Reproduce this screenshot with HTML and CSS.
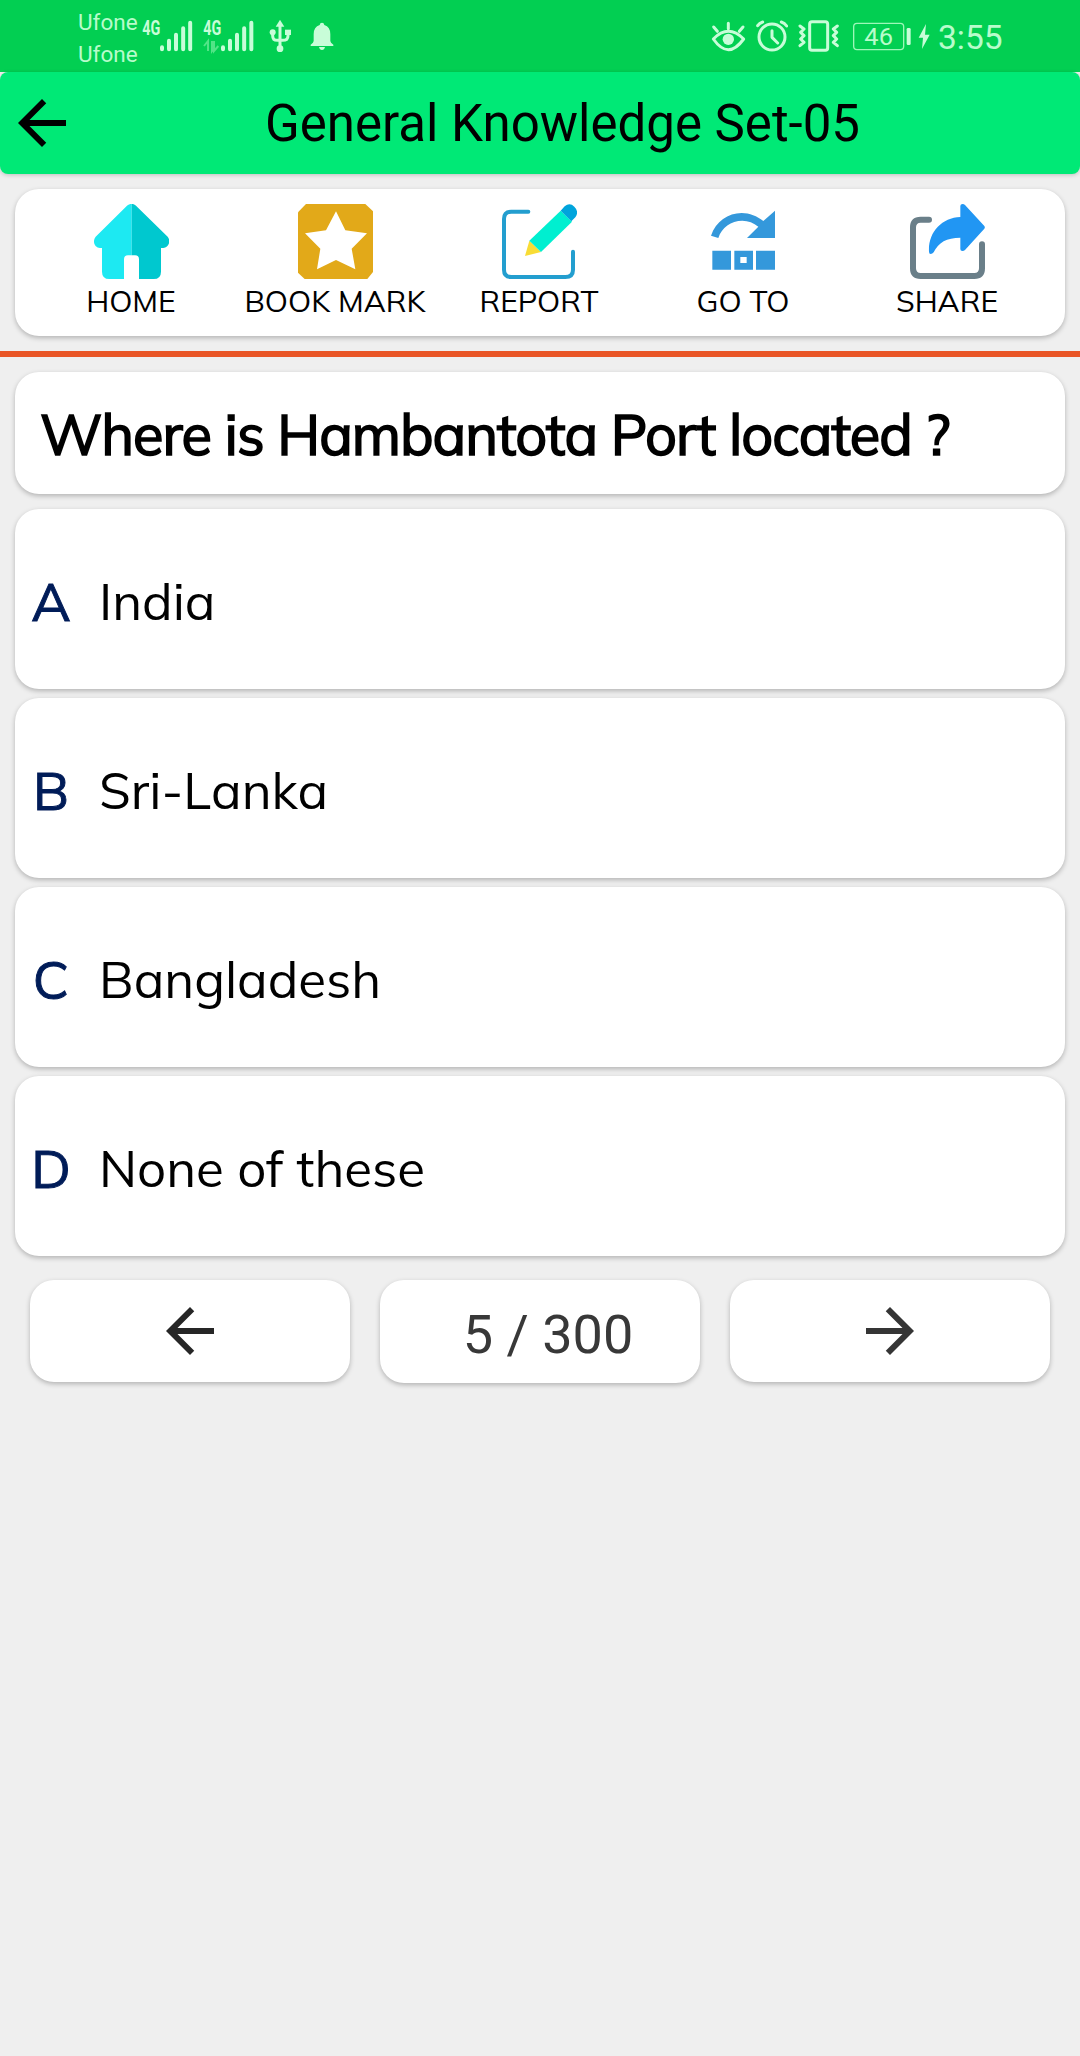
FILE: index.html
```html
<!DOCTYPE html>
<html lang="en">
<head>
  <meta charset="UTF-8">
  <meta name="viewport" content="width=device-width, initial-scale=1.0">
  <link rel="stylesheet" href="styles.css">
  <title>General Knowledge Set-05</title>
</head>
<body>
  <!-- Status bar -->
  <div class="status-bar">
    <div class="carrier">
      <span>Ufone</span>
      <span>Ufone</span>
    </div>
    <svg class="signal" width="52" height="36" viewBox="426 54 156 108">
      <text class="net" x="427" y="104" textLength="54" lengthAdjust="spacingAndGlyphs">4G</text>
      <path class="bars" d="M486 142v6M507 122v26M528 104v44M549.500 85v63M570.500 68v80"/>
    </svg>
    <svg class="signal-two" width="54" height="36" viewBox="606 54 162 108">
      <text class="net" x="610" y="104" textLength="54" lengthAdjust="spacingAndGlyphs">4G</text>
      <path class="data" d="M612 138l12-15v30M636 123v30l6-8M642 123v30l13-15"/>
      <path class="bars" d="M669 142v6M690 122v26M711 104v44M732.500 85v63M754 68v80"/>
    </svg>
    <svg class="usb" width="24" height="36" viewBox="804 54 72 108">
      <path class="line" d="M840 72v72M818 97v10q0 14 14 14h16q16 0 16-14v-10"/>
      <path class="fill" d="M840 59l13 21h-26z"/>
      <circle class="fill" cx="818" cy="97" r="9"/>
      <circle class="fill" cx="840" cy="146" r="10"/>
      <path class="fill" d="M855 89h18v16h-18z"/>
    </svg>
    <svg class="bell" width="24" height="36" viewBox="930 54 72 108">
      <path class="fill" d="M966 68q6 0 7 7 18 5 18 28v20q0 5 9 11v4h-68v-4q9-6 9-11v-20q0-23 18-28 1-7 7-7zM957 141h18q-2 9-9 9t-9-9z"/>
    </svg>

    <div class="status-right">
      <svg class="eye" width="36" height="36" viewBox="60 54 108 108">
        <path class="line" d="M70 117q45-46 91 0-46 64-91 0zM115 70v16M71 81l11 13M159 81l-11 13"/>
        <circle class="fill" cx="115" cy="118" r="17"/>
      </svg>
      <svg class="alarm" width="32" height="36" viewBox="198 54 96 108">
        <circle class="line" cx="246" cy="111" r="39"/>
        <path class="line" d="M246 92v20l17 17M203 77q5-8 15-11M274 66q10 3 16 12"/>
      </svg>
      <svg class="vibrate" width="42" height="36" viewBox="324 54 126 108">
        <rect class="line" x="359" y="65" width="54" height="86" rx="7"/>
        <path class="line" d="M330 78l12 9-10 10 10 10-10 10 10 10-12 10M442 78l-12 9 10 10-10 10 10 10-10 10 12 10"/>
      </svg>
      <svg class="battery" width="60" height="36" viewBox="486 54 180 108">
        <rect class="thin" x="491" y="70" width="150" height="79" rx="10"/>
        <text class="level" x="523" y="134" textLength="86" lengthAdjust="spacingAndGlyphs">46</text>
        <rect class="fill" x="650" y="84" width="12" height="51" rx="4"/>
      </svg>
      <svg class="bolt" width="14" height="36" viewBox="681 54 42 108">
        <path class="fill" d="M708 72l-22 41h13l-3 34 23-43h-14z"/>
      </svg>
      <span class="clock">3:55</span>
    </div>
  </div>

  <header class="app-bar">
    <svg class="arrow" viewBox="0 0 24 24"><path d="M20 11H7.830l5.590-5.590L12 4l-8 8 8 8 1.410-1.410L7.830 13H20z"/></svg>
    <h1>General Knowledge Set-05</h1>
  </header>

  <nav class="card tools">
    <div class="tool">
      <svg viewBox="0 0 225 225">
        <path fill="#1de9f2" d="M113 0C107 0 103 2 99 5L5 98C-6 112 2 132 18 132H24V203Q24 225 46 225H90V166Q90 154 102 154H113Z"/>
        <path fill="#00c8cf" d="M113 0C119 0 122 2 126 5L221 98C232 112 223 132 208 132H201V203Q201 225 179 225H135V166Q135 154 123 154H113Z"/>
      </svg>
      <span>HOME</span>
    </div>
    <div class="tool">
      <svg viewBox="0 0 225 225">
        <path fill="#e2a919" d="M24 0H202L225 22V204L208 225H20L0 206V25Z"/>
        <path fill="#fff" d="M114 22L142 79L207 88L161 134L172 196L114 168L57 196L67 134L21 88L84 79Z"/>
      </svg>
      <span>BOOK MARK</span>
    </div>
    <div class="tool">
      <svg viewBox="0 0 225 225">
        <path fill="none" stroke="#239ecf" stroke-width="12" stroke-linecap="round" d="M79 23H28Q6 23 6 45V197Q6 219 28 219H190Q213 219 213 197V143"/>
        <path fill="#f8dc35" d="M69 156L82 110L117 144Z"/>
        <path fill="#00efd0" d="M82 110L176 20L210 53L117 144Z"/>
        <path fill="#00a4dc" d="M176 20L188 7Q203-6 217 8Q232 23 220 40L208 52Z"/>
      </svg>
      <span>REPORT</span>
    </div>
    <div class="tool">
      <svg viewBox="0 0 225 225">
        <path fill="#3498db" d="M15 95C30 52 66 27 107 27C131 27 153 36 172 51L207 20V102H123L157 68C143 56 127 50 109 50C75 50 47 70 37 102Z"/>
        <path fill="#3498db" fill-rule="evenodd" d="M19 140H75V197H19ZM85 140H141V197H85ZM103 159V177H122V159ZM150 140H207V197H150Z"/>
      </svg>
      <span>GO TO</span>
    </div>
    <div class="tool">
      <svg viewBox="0 0 225 225">
        <path fill="none" stroke="#6a7f89" stroke-width="18" stroke-linecap="round" d="M57 47H32Q9 47 9 70V193Q9 216 32 216H193Q216 216 216 193V121"/>
        <path fill="#2196f3" d="M151 6Q151 0 158 0Q162 0 165 3L223 66Q226 70 223 74L165 138Q162 141 157 141Q151 141 151 135V101C110 101 85 115 71 145Q67 150 62 150Q57 150 57 143C54 85 95 41 151 39Z"/>
      </svg>
      <span>SHARE</span>
    </div>
  </nav>

  <div class="divider"></div>

  <div class="card question">
    <h2>Where is Hambantota Port located ?</h2>
  </div>

  <div class="options">
    <div class="card option">
      <span class="letter">A</span>
      <span class="answer">India</span>
    </div>
    <div class="card option">
      <span class="letter">B</span>
      <span class="answer">Sri-Lanka</span>
    </div>
    <div class="card option">
      <span class="letter">C</span>
      <span class="answer">Bangladesh</span>
    </div>
    <div class="card option">
      <span class="letter">D</span>
      <span class="answer">None of these</span>
    </div>
  </div>

  <!-- Pager -->
  <div class="pager">
    <div class="card page-btn">
      <svg class="arrow prev" viewBox="0 0 24 24"><path d="M20 11H7.830l5.590-5.590L12 4l-8 8 8 8 1.410-1.410L7.830 13H20z"/></svg>
    </div>
    <div class="card page-btn count">5 / 300</div>
    <div class="card page-btn">
      <svg class="arrow next" viewBox="0 0 24 24"><path d="M4 11h12.170l-5.590-5.590L12 4l8 8-8 8-1.410-1.410L16.170 13H4z"/></svg>
    </div>
  </div>
</body>
</html>
```

FILE: styles.css
```css
* {
  margin: 0;
  padding: 0;
  box-sizing: border-box;
}

body {
  background-color: #efefef;
  font-family: Muli, Mulish, Lato, sans-serif;
  color: #000;
  min-height: 100vh;
}

svg {
  display: block;
  flex-shrink: 0;
}

/* status bar */
.status-bar {
  display: flex;
  align-items: center;
  height: 72px;
  padding: 0 77px 0 78px;
  background-color: #02cf52;
  color: #b8fccb;
  font-family: Roboto, sans-serif;
}

.carrier {
  display: flex;
  flex-direction: column;
  width: 60px;
  font-size: 22.5px;
  line-height: 32px;
  padding-top: 4px;
}

.signal {
  margin-left: 4px;
}

.signal-two {
  margin-left: 8px;
}

.usb {
  margin-left: 12px;
}

.bell {
  margin-left: 18px;
}

.fill {
  fill: #c8fdd8;
}

.line {
  fill: none;
  stroke: #c8fdd8;
  stroke-width: 9;
  stroke-linecap: round;
  stroke-linejoin: round;
}

.thin {
  fill: none;
  stroke: #9df7b8;
  stroke-width: 4;
}

.bars {
  stroke: #c8fdd8;
  stroke-width: 12;
  stroke-linecap: round;
}

.data {
  fill: none;
  stroke: #52e486;
  stroke-width: 6;
}

.net {
  fill: #c8fdd8;
  font: bold 58px Roboto, sans-serif;
}

.level {
  fill: #b8fccb;
  font: 74px Roboto, sans-serif;
}

.status-right {
  display: flex;
  align-items: center;
  margin-left: auto;
}

.alarm,
.vibrate {
  margin-left: 10px;
}

.battery {
  margin-left: 12px;
}

.bolt {
  margin-left: 5px;
}

.clock {
  width: 65px;
  margin-left: 7px;
  font-size: 33.5px;
  line-height: 36px;
  padding-top: 3px;
}

/* title bar */
.app-bar {
  display: flex;
  align-items: center;
  height: 102px;
  padding: 0 33px 0 6px;
  background-color: #00e976;
  border-radius: 8px;
  box-shadow: 0 1px 4px rgba(0, 0, 0, 0.2);
}

.app-bar h1 {
  flex: 1;
  text-align: center;
  font: 51px Roboto, sans-serif;
  white-space: nowrap;
}

.arrow {
  width: 72px;
  height: 72px;
}

.prev {
  fill: #262626;
}

.next {
  fill: #353535;
}

.card {
  background-color: #fff;
  border-radius: 24px;
  box-shadow: 0 2px 5px rgba(0, 0, 0, 0.25);
}

/* toolbar */
.tools {
  display: flex;
  height: 147px;
  margin: 15px 15px;
  padding: 15px 15px 0 14px;
}

.tool {
  display: flex;
  flex-direction: column;
  align-items: center;
  width: 204px;
}

.tool svg {
  width: 75px;
  height: 75px;
}

.tool span {
  margin-top: 4px;
  font-size: 30px;
  line-height: 36px;
  white-space: nowrap;
}

.divider {
  height: 6px;
  background-color: #e95526;
}

/* question and answers */
.question {
  display: flex;
  align-items: center;
  height: 122px;
  margin: 15px 15px;
  padding: 2px 0 0 25px;
}

.question h2 {
  font-size: 56px;
  font-weight: normal;
  letter-spacing: -1px;
  white-space: nowrap;
  -webkit-text-stroke: 1.6px #000;
}

.options {
  display: flex;
  flex-direction: column;
  gap: 9px;
  margin: 0 15px;
}

.option {
  display: flex;
  align-items: center;
  height: 180px;
  padding: 3px 0 0 6px;
}

.letter {
  width: 60px;
  text-align: center;
  color: #001c58;
  font-size: 53px;
  -webkit-text-stroke: 1px #001c58;
}

.answer {
  margin-left: 18px;
  font-size: 51px;
  white-space: nowrap;
}

/* pager */
.pager {
  display: flex;
  gap: 30px;
  margin: 24px 30px 0;
}

.page-btn {
  display: flex;
  width: 320px;
  align-items: center;
  justify-content: center;
  height: 102px;
}

.count {
  height: 103px;
  padding: 6px 0 0 16px;
  color: #383838;
  font: 54px Roboto, sans-serif;
}
```
